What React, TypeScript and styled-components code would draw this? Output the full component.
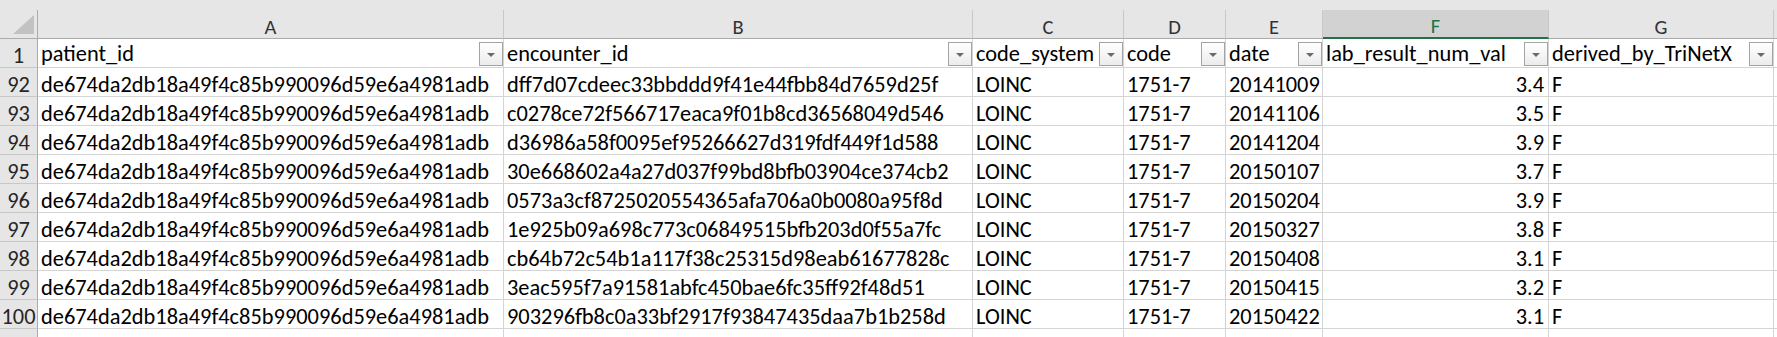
import React from 'react';
import styled, { createGlobalStyle } from 'styled-components';

const GlobalStyle = createGlobalStyle`
  html, body {
    margin: 0;
    padding: 0;
    background: #fff;
    overflow: hidden;
  }
  body {
    font-family: Carlito, Calibri, "Open Sans", sans-serif;
  }
`;

const Sheet = styled.div`
  display: grid;
  grid-template-columns: 38px 466px 469px 151px 102px 97px 226px 225px 1fr;
  grid-template-rows: 10px 29px;
  grid-auto-rows: 29px;
  width: 1777px;
  background-color: #fff;
`;

const TopStrip = styled.div`
  grid-column: 1 / -1;
  background-color: #e6e6e6;
`;

const Corner = styled.div`
  display: flex;
  justify-content: flex-end;
  align-items: flex-end;
  padding: 0 3px 4px 0;
  background-color: #e6e6e6;
  border-right: 1px solid #ababab;
  border-bottom: 1px solid #ababab;
  box-sizing: border-box;
`;

const CornerMark = styled.div`
  width: 21px;
  height: 19px;
  background-color: #c2c2c2;
  clip-path: polygon(100% 0, 100% 100%, 0 100%);
`;

const ColHeader = styled.div<{ $selected?: boolean }>`
  display: flex;
  justify-content: center;
  align-items: flex-end;
  box-sizing: border-box;
  padding-bottom: 1px;
  font-size: 20.5px;
  line-height: 1;
  color: ${p => (p.$selected ? '#217346' : '#333')};
  background-color: ${p => (p.$selected ? '#d2d2d2' : '#e6e6e6')};
  border-right: 1px solid #c8c8c8;
  border-bottom: ${p => (p.$selected ? '2px solid #217346' : '1px solid #ababab')};
`;

const HeaderFiller = styled.div`
  background-color: #e6e6e6;
  border-bottom: 1px solid #ababab;
`;

const RowHeader = styled.div`
  display: flex;
  justify-content: center;
  align-items: flex-end;
  box-sizing: border-box;
  font-size: 22.4px;
  line-height: 1;
  color: #262626;
  background-color: #e6e6e6;
  border-right: 1px solid #ababab;
  border-bottom: 1px solid #c8c8c8;
`;

const Cell = styled.div<{ $align?: 'left' | 'right' }>`
  display: flex;
  align-items: flex-end;
  justify-content: ${p => (p.$align === 'right' ? 'flex-end' : 'flex-start')};
  box-sizing: border-box;
  padding: 0 4px 0 3px;
  overflow: hidden;
  white-space: nowrap;
  font-size: 22.4px;
  line-height: 1;
  color: #000;
  border-right: 1px solid #d4d4d4;
  border-bottom: 1px solid #d4d4d4;
`;

const FieldCell = styled(Cell)`
  justify-content: space-between;
  padding-right: 0;
`;

const FieldName = styled.span`
  min-width: 0;
  line-height: 1.1;
`;

const FilterButton = styled.span`
  display: flex;
  justify-content: center;
  align-items: center;
  flex: none;
  width: 24px;
  height: 24px;
  margin-bottom: 1px;
  box-sizing: border-box;
  border: 1px solid #a3a3a3;
  background: linear-gradient(#ffffff, #ececec);
`;

const Arrow = styled.span`
  width: 0;
  height: 0;
  border-left: 4.5px solid transparent;
  border-right: 4.5px solid transparent;
  border-top: 4px solid #6a6a6a;
  margin-top: 1px;
`;

const Filler = styled.div`
  border-bottom: 1px solid #d4d4d4;
`;

const columns = [
  { letter: 'A', field: 'patient_id' },
  { letter: 'B', field: 'encounter_id' },
  { letter: 'C', field: 'code_system' },
  { letter: 'D', field: 'code' },
  { letter: 'E', field: 'date' },
  { letter: 'F', field: 'lab_result_num_val', selected: true },
  { letter: 'G', field: 'derived_by_TriNetX' },
];

const patient = 'de674da2db18a49f4c85b990096d59e6a4981adb';

const rows = [
  { n: 92, enc: 'dff7d07cdeec33bbddd9f41e44fbb84d7659d25f', date: '20141009', val: '3.4' },
  { n: 93, enc: 'c0278ce72f566717eaca9f01b8cd36568049d546', date: '20141106', val: '3.5' },
  { n: 94, enc: 'd36986a58f0095ef95266627d319fdf449f1d588', date: '20141204', val: '3.9' },
  { n: 95, enc: '30e668602a4a27d037f99bd8bfb03904ce374cb2', date: '20150107', val: '3.7' },
  { n: 96, enc: '0573a3cf8725020554365afa706a0b0080a95f8d', date: '20150204', val: '3.9' },
  { n: 97, enc: '1e925b09a698c773c06849515bfb203d0f55a7fc', date: '20150327', val: '3.8' },
  { n: 98, enc: 'cb64b72c54b1a117f38c25315d98eab61677828c', date: '20150408', val: '3.1' },
  { n: 99, enc: '3eac595f7a91581abfc450bae6fc35ff92f48d51', date: '20150415', val: '3.2' },
  { n: 100, enc: '903296fb8c0a33bf2917f93847435daa7b1b258d', date: '20150422', val: '3.1' },
];

const App: React.FC = () => {
  return (
    <>
      <GlobalStyle />
      <Sheet>
        <TopStrip />

        <Corner>
          <CornerMark />
        </Corner>
        {columns.map(col => (
          <ColHeader key={col.letter} $selected={col.selected}>
            {col.letter}
          </ColHeader>
        ))}
        <HeaderFiller />

        <RowHeader>1</RowHeader>
        {columns.map(col => (
          <FieldCell key={col.field}>
            <FieldName>{col.field}</FieldName>
            <FilterButton>
              <Arrow />
            </FilterButton>
          </FieldCell>
        ))}
        <Filler />

        {rows.map(row => (
          <React.Fragment key={row.n}>
            <RowHeader>{row.n}</RowHeader>
            <Cell>{patient}</Cell>
            <Cell>{row.enc}</Cell>
            <Cell>LOINC</Cell>
            <Cell>1751-7</Cell>
            <Cell>{row.date}</Cell>
            <Cell $align="right">{row.val}</Cell>
            <Cell>F</Cell>
            <Filler />
          </React.Fragment>
        ))}

        {/* next row, only its top shows */}
        <RowHeader>101</RowHeader>
        <Cell>d3e5ac0d96e3a0c7d25e4a3ce9b0a17e5c3de6ab</Cell>
        <Cell>b3e90a7c5e2d3ca06e59ac2e7a85d1e09ca3e4b0</Cell>
        <Cell />
        <Cell />
        <Cell />
        <Cell $align="right" />
        <Cell />
        <Filler />
      </Sheet>
    </>
  );
};

export default App;
